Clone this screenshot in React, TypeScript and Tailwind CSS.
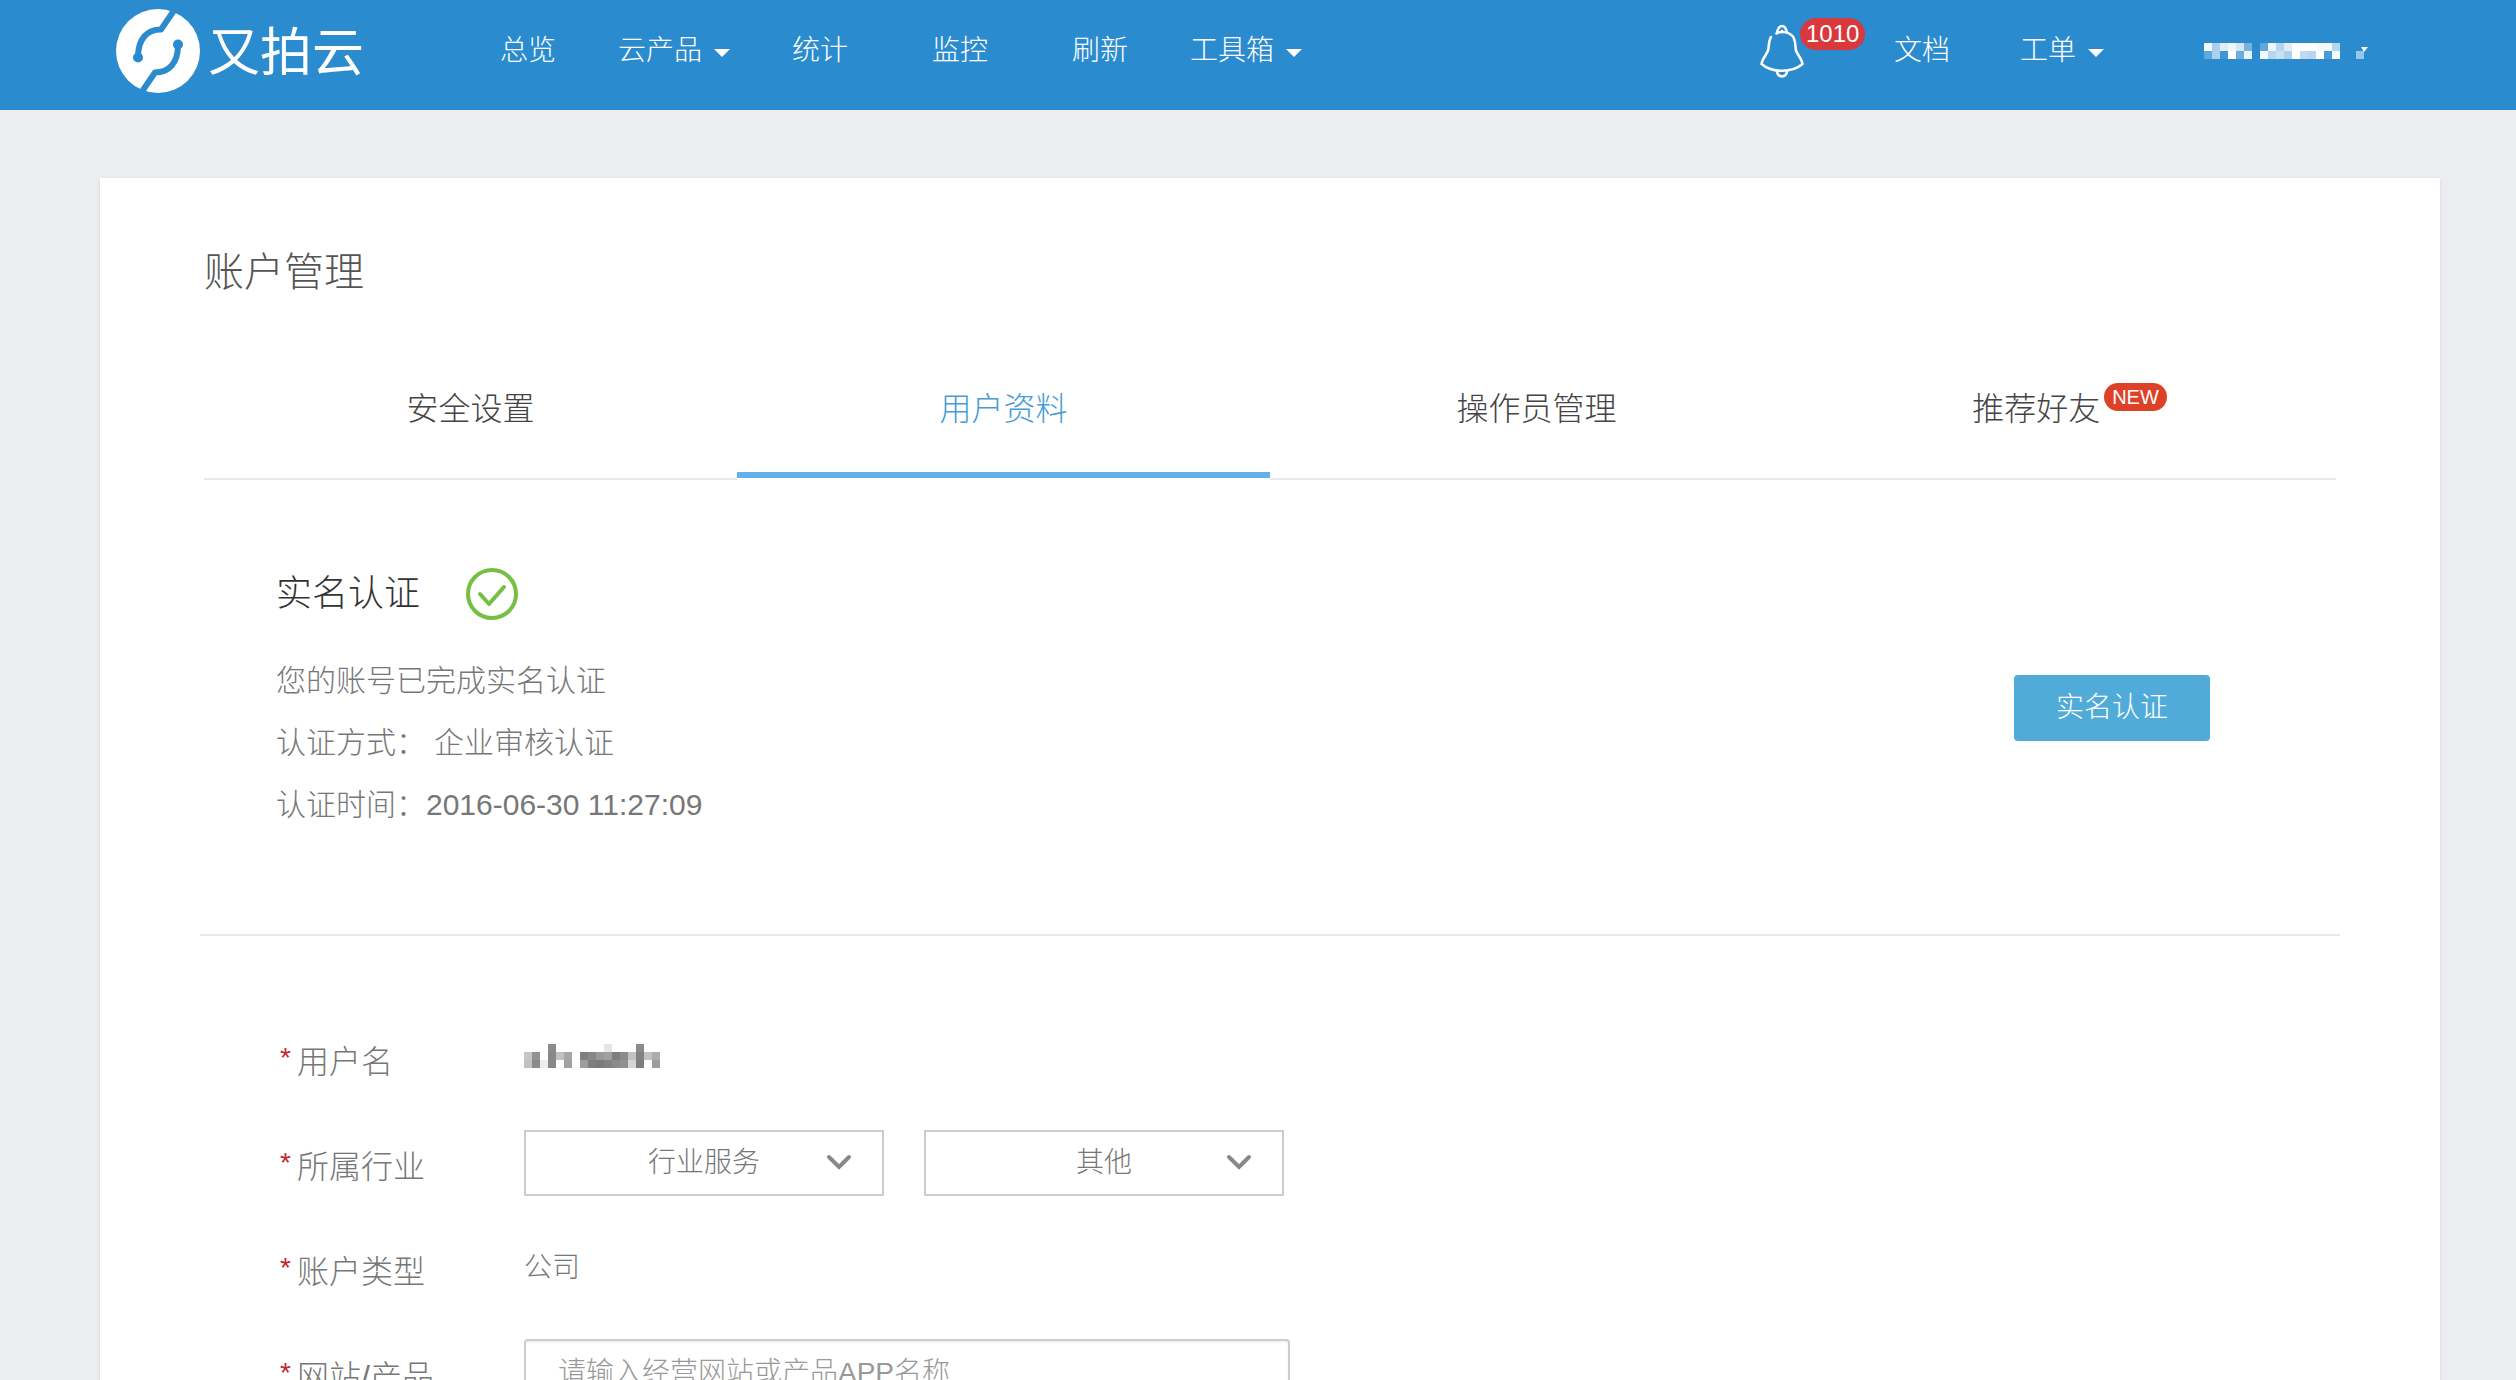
import type { ReactNode } from 'react';

interface NavItem {
  label: string;
  menu?: boolean;
}

const navItems: NavItem[] = [
  { label: '总览' },
  { label: '云产品', menu: true },
  { label: '统计' },
  { label: '监控' },
  { label: '刷新' },
  { label: '工具箱', menu: true },
];

const tabs = [
  { id: 'security', label: '安全设置' },
  { id: 'profile', label: '用户资料' },
  { id: 'operators', label: '操作员管理' },
  { id: 'invite', label: '推荐好友', isNew: true },
];

// Opacity (0-100) of every 8px cell in a hidden name, row by row
const maskedAccount = [
  [95, 60, 85, 92, 80, 35, 0, 25, 92, 65, 85, 100, 100, 100, 95, 95, 65],
  [25, 60, 10, 100, 30, 90, 0, 95, 65, 75, 60, 100, 70, 65, 100, 15, 95],
];

const maskedUsername = [
  [0, 0, 0, 85, 0, 0, 0, 0, 0, 0, 18, 0, 0, 0, 85, 0, 0],
  [42, 80, 0, 88, 45, 65, 0, 95, 88, 75, 70, 95, 85, 45, 92, 45, 60],
  [45, 85, 12, 88, 0, 68, 0, 72, 95, 98, 92, 85, 82, 30, 95, 0, 72],
];

function Mosaic({ cells, color, label }: { cells: number[][]; color: string; label: string }) {
  const width = cells[0].length * 8;
  const height = cells.length * 8;
  return (
    <svg width={width} height={height} className={color} role="img" aria-label={label} shapeRendering="crispEdges">
      {cells.map((row, y) =>
        row.map((value, x) => (
          <rect key={`${x}-${y}`} x={x * 8} y={y * 8} width="8" height="8" fill="currentColor" opacity={value / 100} />
        ))
      )}
    </svg>
  );
}

function Caret() {
  return (
    <svg width="16" height="8" viewBox="0 0 16 8" className="ml-3 mt-1" aria-hidden="true">
      <path d="M0 0h16L8 8z" fill="currentColor" />
    </svg>
  );
}

function LogoMark() {
  return (
    <svg width="84" height="84" viewBox="0 0 84 84" aria-hidden="true">
      <circle cx="42" cy="42" r="42" fill="#fff" />
      <g fill="none" stroke="#2b8bcf" strokeWidth="6" strokeLinejoin="round">
        <path d="M59 0 45 20.500C31 20.500 22 30 22 48" />
        <path d="M25 84 39 63.500C53 63.500 62 54 62 36" />
      </g>
      <circle cx="22" cy="48.500" r="5" fill="#2b8bcf" />
      <circle cx="62" cy="35.500" r="5" fill="#2b8bcf" />
    </svg>
  );
}

function Bell() {
  return (
    <svg width="44" height="54" viewBox="0 0 44 54" fill="none" stroke="currentColor" strokeWidth="2.500" strokeLinecap="round" strokeLinejoin="round" aria-hidden="true">
      <path d="M17 8.500C18 4 19.500 2 22 2s4 2 5 6.500" />
      <path d="M11 13C8.500 17 9 23 8 26.500 6.500 31 2 35 1.500 40 12 49 32 49 42.500 40 42 35 37.500 31 36 26.500 35 22 36 16 32.500 12 29 8 21 6.500 16.500 9.500" />
      <path d="M17 47.500c1 6.500 9 6.500 10 0M22 7v1" />
    </svg>
  );
}

function CheckCircle() {
  return (
    <svg width="52" height="52" viewBox="0 0 52 52" fill="none" stroke="#75bf43" strokeWidth="4" aria-hidden="true">
      <circle cx="26" cy="26" r="24" />
      <path d="M14 26l9 10 15-17" strokeLinecap="round" strokeLinejoin="round" />
    </svg>
  );
}

function Header() {
  return (
    <header className="flex h-[110px] shrink-0 items-center bg-[#2b8bcf] pb-2 pl-[116px] pr-[148px] text-[28px] leading-10 text-white">
      <a href="#home" className="flex shrink-0 items-center gap-2">
        <LogoMark />
        <span className="pt-1 text-[52px] leading-[60px] font-normal">又拍云</span>
      </a>
      <nav className="ml-[94px] flex">
        {navItems.map((item) => (
          <a key={item.label} href="#nav" className="flex min-w-[140px] shrink-0 items-center justify-center px-5">
            {item.label}
            {item.menu && <Caret />}
          </a>
        ))}
      </nav>
      <div className="ml-auto flex shrink-0 items-center">
        <button type="button" aria-label="消息" className="relative mr-[90px]">
          <Bell />
          <span className="absolute -top-1.5 left-10 h-8 rounded-full bg-[#d9383d] px-1.5 text-2xl leading-8">
            1010
          </span>
        </button>
        <a href="#docs">文档</a>
        <a href="#tickets" className="ml-[70px] flex items-center">
          工单
          <Caret />
        </a>
        <button type="button" className="ml-[100px] flex items-center gap-4">
          <Mosaic cells={maskedAccount} color="text-white" label="当前账户" />
          <svg width="12" height="16" viewBox="0 0 12 16" aria-hidden="true">
            <path d="M0 8h8v8H0z" fill="#fff" opacity=".5" />
            <path d="M5 4h7L8 9z" fill="#fff" />
          </svg>
        </button>
      </div>
    </header>
  );
}

function Field({ id, label, children }: { id: string; label: string; children: ReactNode }) {
  return (
    <div className="flex h-[66px] items-center">
      <label htmlFor={id} className="flex w-[248px] shrink-0 pt-2 text-[32px] leading-12">
        <span className="w-[21px] pl-1 text-[28px] leading-10 font-normal text-[#c1272d]">*</span>
        {label}
      </label>
      {children}
    </div>
  );
}

function Select({ id, label, options }: { id: string; label?: string; options: string[] }) {
  return (
    <div className="relative mr-10 w-[360px]">
      <select
        id={id}
        aria-label={label}
        className="h-[66px] w-full appearance-none border-2 border-[#ccc] bg-white text-center text-[28px]"
      >
        {options.map((option) => (
          <option key={option}>{option}</option>
        ))}
      </select>
      <svg
        width="26"
        height="16"
        viewBox="0 0 26 16"
        className="pointer-events-none absolute top-6 right-8"
        fill="none"
        stroke="#888"
        strokeWidth="4"
        strokeLinecap="round"
        aria-hidden="true"
      >
        <path d="M3 3l10 10L23 3" />
      </svg>
    </div>
  );
}

export default function App() {
  return (
    <div className="flex h-screen flex-col overflow-hidden bg-[#ebedf1] font-['Liberation_Sans','Noto_Sans_CJK_SC',sans-serif] font-light text-[#777]">
      <Header />

      <main className="mt-[68px] mr-[76px] ml-[100px] grow bg-white px-[104px] pt-[66px] shadow-sm">
        <h1 className="text-[40px] leading-14 text-[#555]">账户管理</h1>

        {/* Tabs */}
        <div role="tablist" className="mt-10 grid grid-cols-4 text-[32px]">
          {tabs.map((tab) => (
            <button
              key={tab.id}
              type="button"
              role="tab"
              aria-selected={tab.id === 'profile'}
              className={`flex h-[140px] items-center justify-center border-b-2 ${
                tab.id === 'profile'
                  ? 'border-white text-[#469cd6] shadow-[inset_0_-6px_0_#64b1ea]'
                  : 'border-[#eaeaea] text-[#444]'
              }`}
            >
              {tab.label}
              {tab.isNew && (
                <span className="mb-6 ml-1 h-7 rounded-full bg-[#dd4229] px-2 text-xl leading-7 text-white">NEW</span>
              )}
            </button>
          ))}
        </div>

        {/* Identity verification */}
        <section className="-mx-1 flex items-center justify-between border-b-2 border-[#eaeaea] pt-[88px] pr-[130px] pb-[98px] pl-[76px]">
          <div>
            <div className="flex items-center gap-[46px]">
              <h2 className="text-[36px] leading-[52px] text-[#333]">实名认证</h2>
              <CheckCircle />
            </div>
            <div className="mt-[30px] text-[30px] leading-[62px]">
              <p>您的账号已完成实名认证</p>
              <p>
                认证方式：<span className="ml-2">企业审核认证</span>
              </p>
              <p>认证时间：2016-06-30 11:27:09</p>
            </div>
          </div>
          <button type="button" className="mt-3 h-[66px] w-[196px] rounded bg-[#51abd9] text-[28px] text-white">
            实名认证
          </button>
        </section>

        {/* Profile form */}
        <form className="flex flex-col gap-[39px] pt-[89px] pl-[72px]">
          <Field id="username" label="用户名">
            <output id="username" className="pb-1">
              <Mosaic cells={maskedUsername} color="text-[#777]" label="用户名" />
            </output>
          </Field>
          <Field id="industry" label="所属行业">
            <Select id="industry" options={['行业服务']} />
            <Select id="sub-industry" label="细分行业" options={['其他']} />
          </Field>
          <Field id="account-type" label="账户类型">
            <output id="account-type" className="text-[28px]">
              公司
            </output>
          </Field>
          <Field id="website" label="网站/产品">
            <input
              id="website"
              type="text"
              placeholder="请输入经营网站或产品APP名称"
              className="h-[68px] w-[766px] rounded border-2 border-[#ccc] px-8 text-[28px] shadow-[inset_0_2px_2px_#0000000d] placeholder:text-[#999]"
            />
          </Field>
        </form>
      </main>
    </div>
  );
}
